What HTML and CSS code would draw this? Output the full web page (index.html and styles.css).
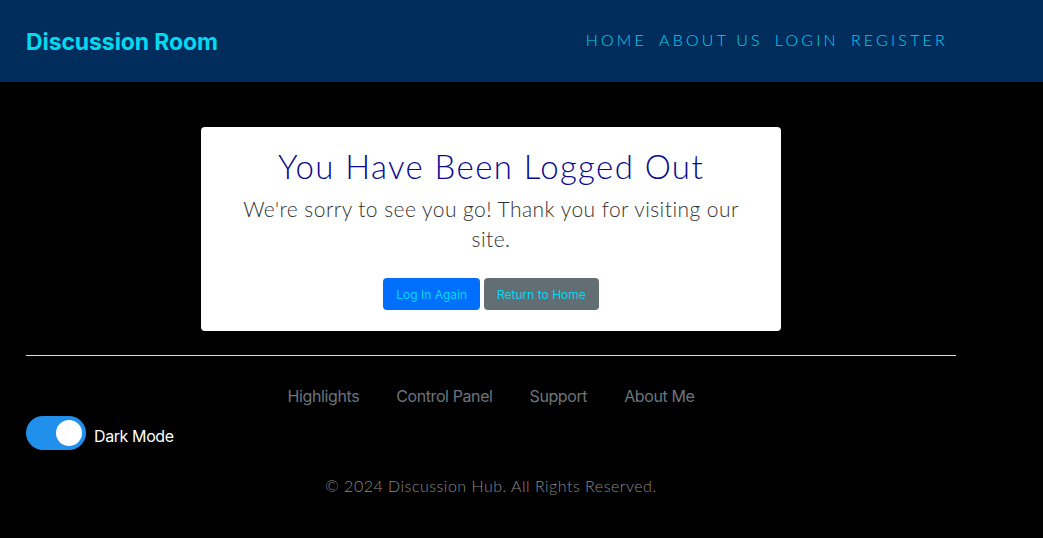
FILE: index.html
```html
<!DOCTYPE html>
<html lang="en">
<head>
<meta charset="utf-8">
<title>Logged Out - Discussion Room</title>
<link rel="stylesheet" href="styles.css">
</head>
<body>
<header class="topbar">
  <div class="brand">Discussion Room</div>
  <nav class="mainnav">
    <a href="#">Home</a>
    <a href="#">About Us</a>
    <a href="#">Login</a>
    <a href="#">Register</a>
  </nav>
</header>
<main class="page">
  <section class="card">
    <h1 class="card-title">You Have Been Logged Out</h1>
    <p class="card-text">We're sorry to see you go! Thank you for visiting our site.</p>
    <div class="actions">
      <a class="btn btn-primary" href="#">Log In Again</a>
      <a class="btn btn-secondary" href="#">Return to Home</a>
    </div>
  </section>
  <footer class="footer">
    <hr class="rule">
    <nav class="footnav">
      <a href="#">Highlights</a>
      <a href="#">Control Panel</a>
      <a href="#">Support</a>
      <a href="#">About Me</a>
    </nav>
    <label class="mode">
      <span class="switch"><span class="knob"></span></span>
      <span class="mode-label">Dark Mode</span>
    </label>
    <p class="copy">© 2024 Discussion Hub. All Rights Reserved.</p>
  </footer>
</main>
</body>
</html>
```
FILE: styles.css
```css
* { box-sizing: border-box; }
html, body { margin: 0; padding: 0; }
body {
  background: #000;
  font-family: "Lato", "Open Sans", sans-serif;
  width: 1043px;
  height: 538px;
  overflow: hidden;
}
a { text-decoration: none; }

.topbar {
  height: 82px;
  background: #002d5b;
  display: flex;
  align-items: center;
  justify-content: space-between;
  padding: 0 95px 0 26px;
}
.brand {
  font-family: "Inter", "Roboto", sans-serif;
  font-weight: 700;
  font-size: 23px;
  color: #00d9ef;
  letter-spacing: -0.1px;
  padding-top: 2px;
}
.mainnav {
  display: flex;
  gap: 12px;
  padding-bottom: 4px;
}
.mainnav a {
  font-family: "Lato", sans-serif;
  font-weight: 300;
  font-size: 16px;
  letter-spacing: 3.2px;
  text-transform: uppercase;
  color: #00d0ec;
}

.page {
  width: 930px;
  margin: 0 0 0 26px;
  display: flex;
  flex-direction: column;
  align-items: center;
}
.card {
  margin-top: 45px;
  width: 580px;
  background: #fff;
  border-radius: 4px;
  padding: 17px 30px 21px;
  text-align: center;
}
.card-title {
  margin: 0;
  font-weight: 300;
  font-size: 33px;
  line-height: 44px;
  letter-spacing: 1.4px;
  color: #0a0a8f;
}
.card-text {
  margin: 6px 0 0;
  font-weight: 300;
  font-size: 21px;
  line-height: 30px;
  letter-spacing: 0.45px;
  color: #333;
}
.actions {
  margin-top: 24px;
  display: flex;
  justify-content: center;
  gap: 4px;
}
.btn {
  font-family: "Inter", "Roboto", sans-serif;
  font-size: 12px;
  height: 32px;
  display: inline-flex;
  align-items: center;
  padding: 0 13px;
  border-radius: 4px;
  color: #00d9ef;
}
.btn-primary { background: #006ffe; }
.btn-secondary { background: #636d74; }

.footer {
  width: 100%;
  display: flex;
  flex-direction: column;
  align-items: center;
}
.rule {
  width: 100%;
  margin: 24px 0 0;
  border: 0;
  border-top: 1px solid #dcdcdc;
}
.footnav {
  margin-top: 30px;
  display: flex;
  gap: 37px;
}
.footnav a {
  font-family: "Inter", "Roboto", sans-serif;
  font-size: 16px;
  letter-spacing: -0.4px;
  color: #6c757d;
}
.mode {
  align-self: flex-start;
  margin-top: 10px;
  display: flex;
  align-items: center;
  gap: 8px;
}
.switch {
  width: 60px;
  height: 34px;
  border-radius: 17px;
  background: #2190ed;
  display: flex;
  align-items: center;
  justify-content: flex-end;
  padding: 0 4px;
}
.knob {
  width: 26px;
  height: 26px;
  border-radius: 50%;
  background: #fff;
}
.mode-label {
  font-family: "Inter", "Roboto", sans-serif;
  font-size: 16px;
  letter-spacing: -0.4px;
  color: #fff;
  padding-top: 6px;
}
.copy {
  margin: 26px 0 0;
  font-weight: 300;
  font-size: 16px;
  letter-spacing: 0.5px;
  color: #8a8a8a;
}
```
